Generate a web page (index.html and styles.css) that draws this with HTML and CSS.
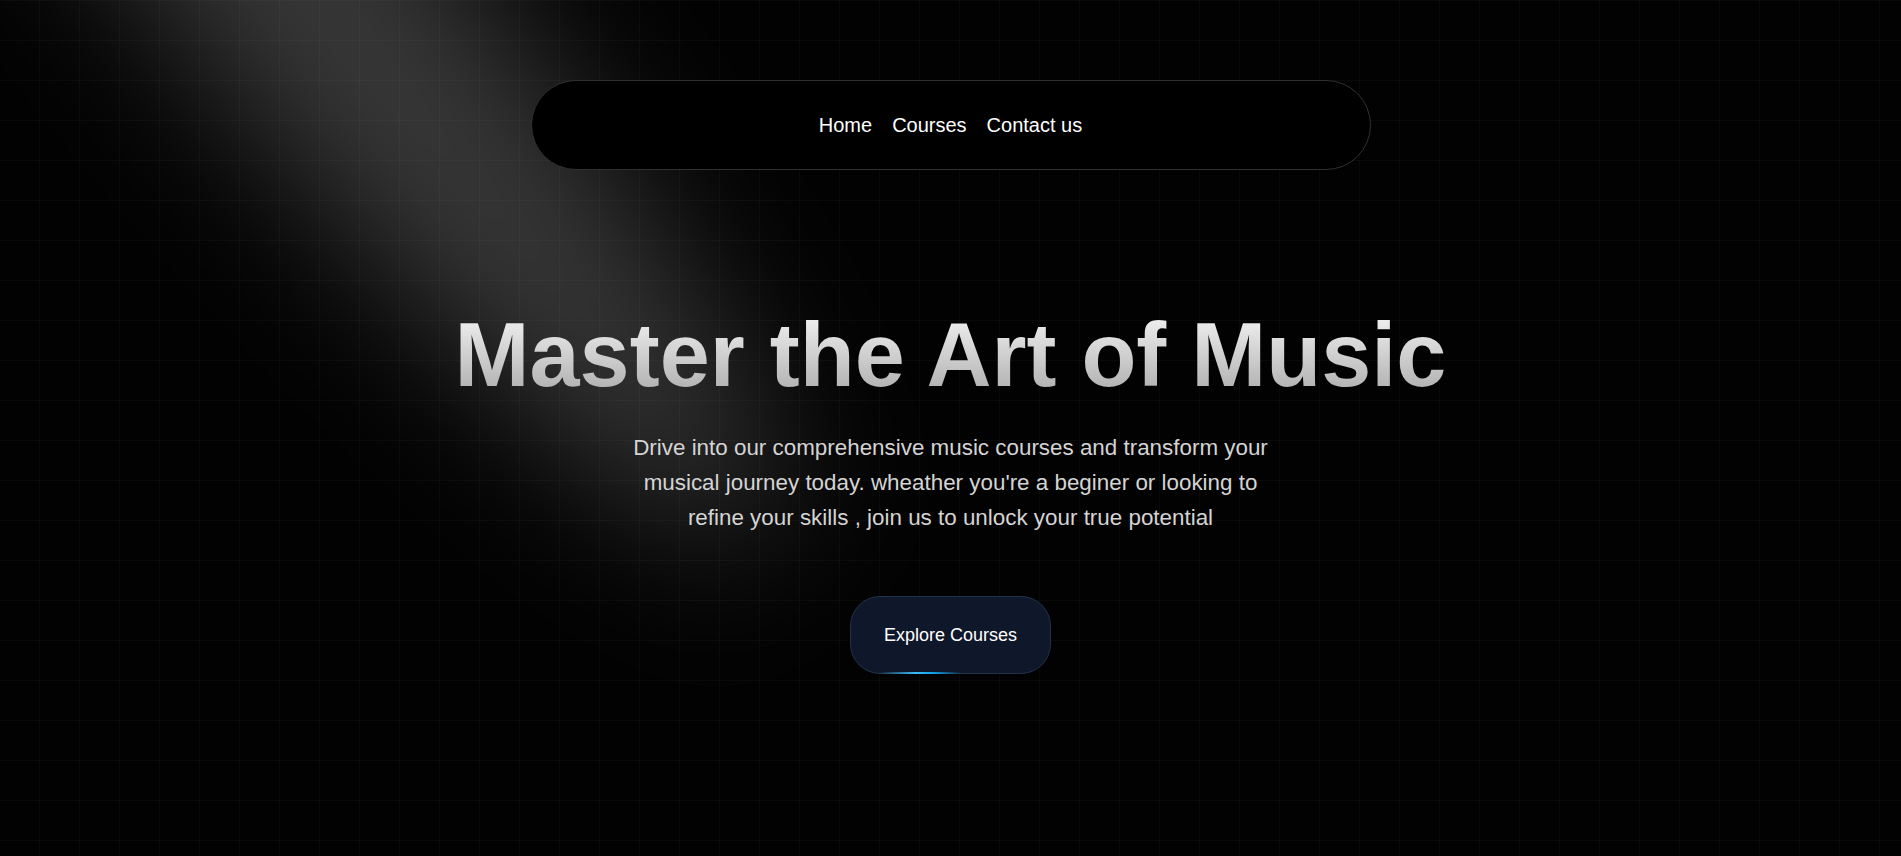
FILE: index.html
```html
<!DOCTYPE html>
<html lang="en">
<head>
<meta charset="utf-8">
<title>Music Academy</title>
<link rel="stylesheet" href="styles.css">
</head>
<body>
<div class="page">
  <div class="spotlight"></div>
  <header class="nav-wrap">
    <nav class="nav">
      <a href="#">Home</a>
      <a href="#">Courses</a>
      <a href="#">Contact us</a>
    </nav>
  </header>
  <main class="hero">
    <h1 class="title">Master the Art of Music</h1>
    <p class="lead">Drive into our comprehensive music courses and transform your musical journey today. wheather you're a beginer or looking to refine your skills , join us to unlock your true potential</p>
    <a class="cta" href="#">Explore Courses<span class="cta-glow"></span></a>
  </main>
</div>
</body>
</html>
```
FILE: styles.css
```css
html, body {
  margin: 0;
  height: 100%;
}
body {
  background: #020202;
  font-family: "Liberation Sans", Arial, sans-serif;
  color: #fff;
  overflow: hidden;
}
.page {
  position: relative;
  min-height: 100vh;
  overflow: hidden;
  background-color: #020202;
  background-image:
    linear-gradient(to bottom, rgba(255,255,255,0.028) 1px, transparent 1px),
    linear-gradient(to left, rgba(255,255,255,0.028) 1px, transparent 1px);
  background-size: 40px 40px;
}
.spotlight {
  position: absolute;
  left: -400px;
  top: -140px;
  width: 1420px;
  height: 260px;
  border-radius: 50%;
  background: rgba(255,255,255,0.21);
  filter: blur(75px);
  transform: rotate(50deg);
  pointer-events: none;
  z-index: 1;
}
.nav-wrap {
  position: relative;
  z-index: 2;
  display: flex;
  justify-content: center;
  padding-top: 80px;
}
.nav {
  width: 840px;
  height: 90px;
  box-sizing: border-box;
  border: 1px solid #303030;
  border-radius: 45px;
  background: #000;
  display: flex;
  align-items: center;
  justify-content: center;
  gap: 20px;
}
.nav a {
  color: #fff;
  text-decoration: none;
  font-size: 20px;
}
.hero {
  position: relative;
  z-index: 2;
  display: flex;
  flex-direction: column;
  align-items: center;
  text-align: center;
  padding-top: 134px;
}
.title {
  margin: 0;
  font-size: 90px;
  line-height: 103.5px;
  font-weight: 700;
  background: linear-gradient(to bottom, #fafafa, #a3a3a3);
  -webkit-background-clip: text;
  background-clip: text;
  color: transparent;
}
.lead {
  margin: 22px 0 0;
  max-width: 660px;
  font-size: 22.4px;
  line-height: 35.3px;
  color: #d4d4d4;
}
.cta {
  position: relative;
  margin-top: 61px;
  display: inline-flex;
  align-items: center;
  justify-content: center;
  height: 78px;
  padding: 0 33px;
  box-sizing: border-box;
  border: 1px solid #22324a;
  border-radius: 30px;
  background: #0f172a;
  color: #fff;
  font-size: 18px;
  text-decoration: none;
}
.cta-glow {
  position: absolute;
  left: 28px;
  width: 82px;
  bottom: -1px;
  height: 2px;
  background: linear-gradient(to right, transparent, #38bdf8 45%, #0ea5e9 65%, transparent);
}
```
